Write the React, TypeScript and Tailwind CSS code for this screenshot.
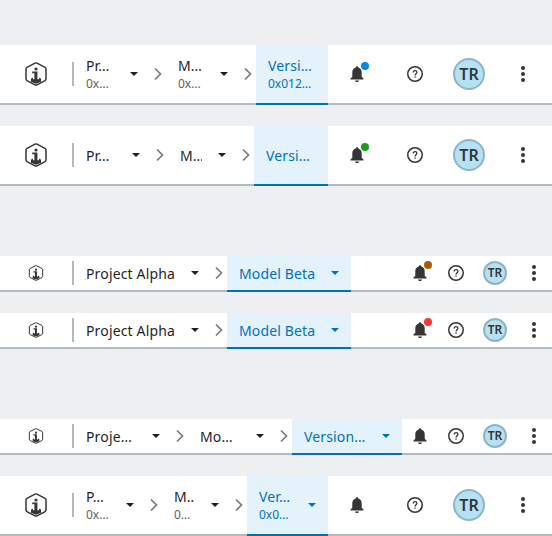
import React from "react";

type Crumb = { width: string; title: string; sub?: string; caret?: boolean };
type BarProps = { crumbs: Crumb[]; tall?: boolean; dot?: string; margin: string };

function Logo({ tall }: { tall?: boolean }) {
  return (
    <svg viewBox="0 0 24 24" className={tall ? "size-6" : "size-4"} fill="none" stroke="#353535">
      <path d="M11 1.2Q12 .7 13 1.200L21 5.300Q22 5.900 22 7V17Q22 18.100 21 18.700L13 22.800Q12 23.300 11 22.800L3 18.700Q2 18.100 2 17V7Q2 5.900 3 5.300Z" strokeWidth="1.5" />
      <circle cx="12" cy="7" r="1.600" fill="#353535" stroke="none" />
      <path d="M8.200 9.500h5.200v7.800h1.400l.6-1.700 1.600 1.200v3L12 21.700l-5-1.900v-3l1.600-1.200.6 1.700h1.200v-6H8.200Z" fill="#353535" stroke="none" />
    </svg>
  );
}

function Caret() {
  return (
    <svg viewBox="0 0 24 24" className="size-6 shrink-0" fill="currentColor">
      <path d="M8 10h8l-4 4Z" />
    </svg>
  );
}

function Chevron() {
  return (
    <svg viewBox="0 0 16 24" className="h-6 w-4 shrink-0" fill="none" stroke="#7a7a7a" strokeWidth="1.700">
      <path d="m5 6.500 5.500 5.500L5 17.500" />
    </svg>
  );
}

function Bell() {
  return (
    <svg viewBox="0 0 24 24" className="size-6" fill="#353535">
      <path d="M12 4.200c.9 0 1.300.6 1.300 1.400C15.500 6.200 16.700 8 16.700 10.300V14.700l1.800 1.900v1H5.500v-1l1.800-1.900v-4.400C7.300 8 8.500 6.200 10.700 5.600 10.700 4.800 11.100 4.200 12 4.200ZM10 18.500h4c0 .9-.7 1.500-2 1.500s-2-.6-2-1.500Z" />
    </svg>
  );
}

function Help() {
  return (
    <svg viewBox="0 0 24 24" className="size-6" fill="none" stroke="#353535">
      <circle cx="12" cy="12" r="7.250" strokeWidth="1.500" />
      <path d="M10.200 10.500C10.200 9.300 10.900 8.600 12 8.600s1.900.7 1.900 1.700c0 1.400-1.800 1.500-1.800 3.200" strokeWidth="1.300" />
      <path d="M11.400 14.500h1.300v1.300h-1.300Z" fill="#353535" stroke="none" />
    </svg>
  );
}

function Kebab() {
  return (
    <svg viewBox="0 0 24 24" className="size-6" fill="#353535">
      <circle cx="12" cy="6" r="2" />
      <circle cx="12" cy="12" r="2" />
      <circle cx="12" cy="18" r="2" />
    </svg>
  );
}

function Bar({ crumbs, tall, dot, margin }: BarProps) {
  const cell = `flex shrink-0 items-center justify-center ${tall ? "w-[58px]" : "w-9"}`;
  return (
    <header className={`flex bg-white shadow-[inset_0_-2px_0_#b0babf] ${tall ? "h-15" : "h-9"} ${margin}`}>
      <div className="flex w-[72px] shrink-0 items-center justify-center pb-0.5">
        <Logo tall={tall} />
      </div>
      <div className="flex items-center pb-0.5">
        <div className="h-6 w-0.5 bg-[#b0babf]" />
      </div>
      <nav className="flex">
        {crumbs.map((crumb, i) => {
          const active = i === crumbs.length - 1;
          return (
            <React.Fragment key={crumb.title}>
              {i > 0 && (
                <div className="flex items-center pb-0.5">
                  <Chevron />
                </div>
              )}
              <div
                className={`flex items-center border-b-2 pl-3 ${
                  active ? "border-[#0072bc] bg-[#e4f2fc] text-[#0072bc]" : "border-transparent text-[#1f1f1f]"
                } ${crumb.caret === false ? "pr-3" : "pr-1"}`}
              >
                <div className={`overflow-hidden whitespace-nowrap ${crumb.width}`}>
                  <div className={`text-sm leading-5 tracking-[.15px] ${crumb.sub ? "" : "pt-0.5"}`}>{crumb.title}</div>
                  {crumb.sub && (
                    <div className={`text-xs leading-4 ${active ? "" : "text-[#616161]"}`}>{crumb.sub}</div>
                  )}
                </div>
                {crumb.caret !== false && (
                  <div className="pl-2">
                    <Caret />
                  </div>
                )}
              </div>
            </React.Fragment>
          );
        })}
      </nav>
      <div className="ml-auto flex pb-0.5">
        <div className={cell}>
          <div className="relative">
            <Bell />
            {dot && <span className={`absolute top-0 right-0 size-2 rounded-full ${dot}`} />}
          </div>
        </div>
        <div className={cell}>
          <Help />
        </div>
        <div className={`flex shrink-0 items-center justify-center ${tall ? "w-[50px]" : "w-[42px]"}`}>
          <div
            className={`flex items-center justify-center rounded-full border-2 border-[#8fb5c4] bg-[#b5e1f4] font-semibold text-[#353535] ${
              tall ? "size-8 text-base" : "size-6 text-xs"
            }`}
          >
            TR
          </div>
        </div>
        <div className={cell}>
          <Kebab />
        </div>
      </div>
    </header>
  );
}

export default function App() {
  return (
    <main className="flex h-[536px] w-[552px] flex-col overflow-hidden bg-[#eeeff1] font-['Noto_Sans',sans-serif]">
      <Bar
        tall
        margin="mt-[45px]"
        dot="bg-[#008ae6]"
        crumbs={[
          { width: "w-7", title: "Pr…", sub: "0x…" },
          { width: "w-[26px]", title: "M…", sub: "0x…" },
          { width: "w-12", title: "Versi…", sub: "0x012…", caret: false },
        ]}
      />
      <Bar
        tall
        margin="mt-[21px]"
        dot="bg-[#18a018]"
        crumbs={[
          { width: "w-[30px]", title: "Pr…" },
          { width: "w-[22px]", title: "M…" },
          { width: "w-[50px]", title: "Versi…", caret: false },
        ]}
      />
      <Bar
        margin="mt-[70px]"
        dot="bg-[#a65f00]"
        crumbs={[
          { width: "w-[89px]", title: "Project Alpha" },
          { width: "w-[76px]", title: "Model Beta" },
        ]}
      />
      <Bar
        margin="mt-[21px]"
        dot="bg-[#ff3333]"
        crumbs={[
          { width: "w-[89px]", title: "Project Alpha" },
          { width: "w-[76px]", title: "Model Beta" },
        ]}
      />
      <Bar
        margin="mt-[70px]"
        crumbs={[
          { width: "w-[50px]", title: "Proje…" },
          { width: "w-10", title: "Mo…" },
          { width: "w-[62px]", title: "Version…" },
        ]}
      />
      <Bar
        tall
        margin="mt-[21px]"
        crumbs={[
          { width: "w-6", title: "P…", sub: "0x…" },
          { width: "w-[21px]", title: "M…", sub: "0…" },
          { width: "w-[33px]", title: "Ver…", sub: "0x0…" },
        ]}
      />
    </main>
  );
}
